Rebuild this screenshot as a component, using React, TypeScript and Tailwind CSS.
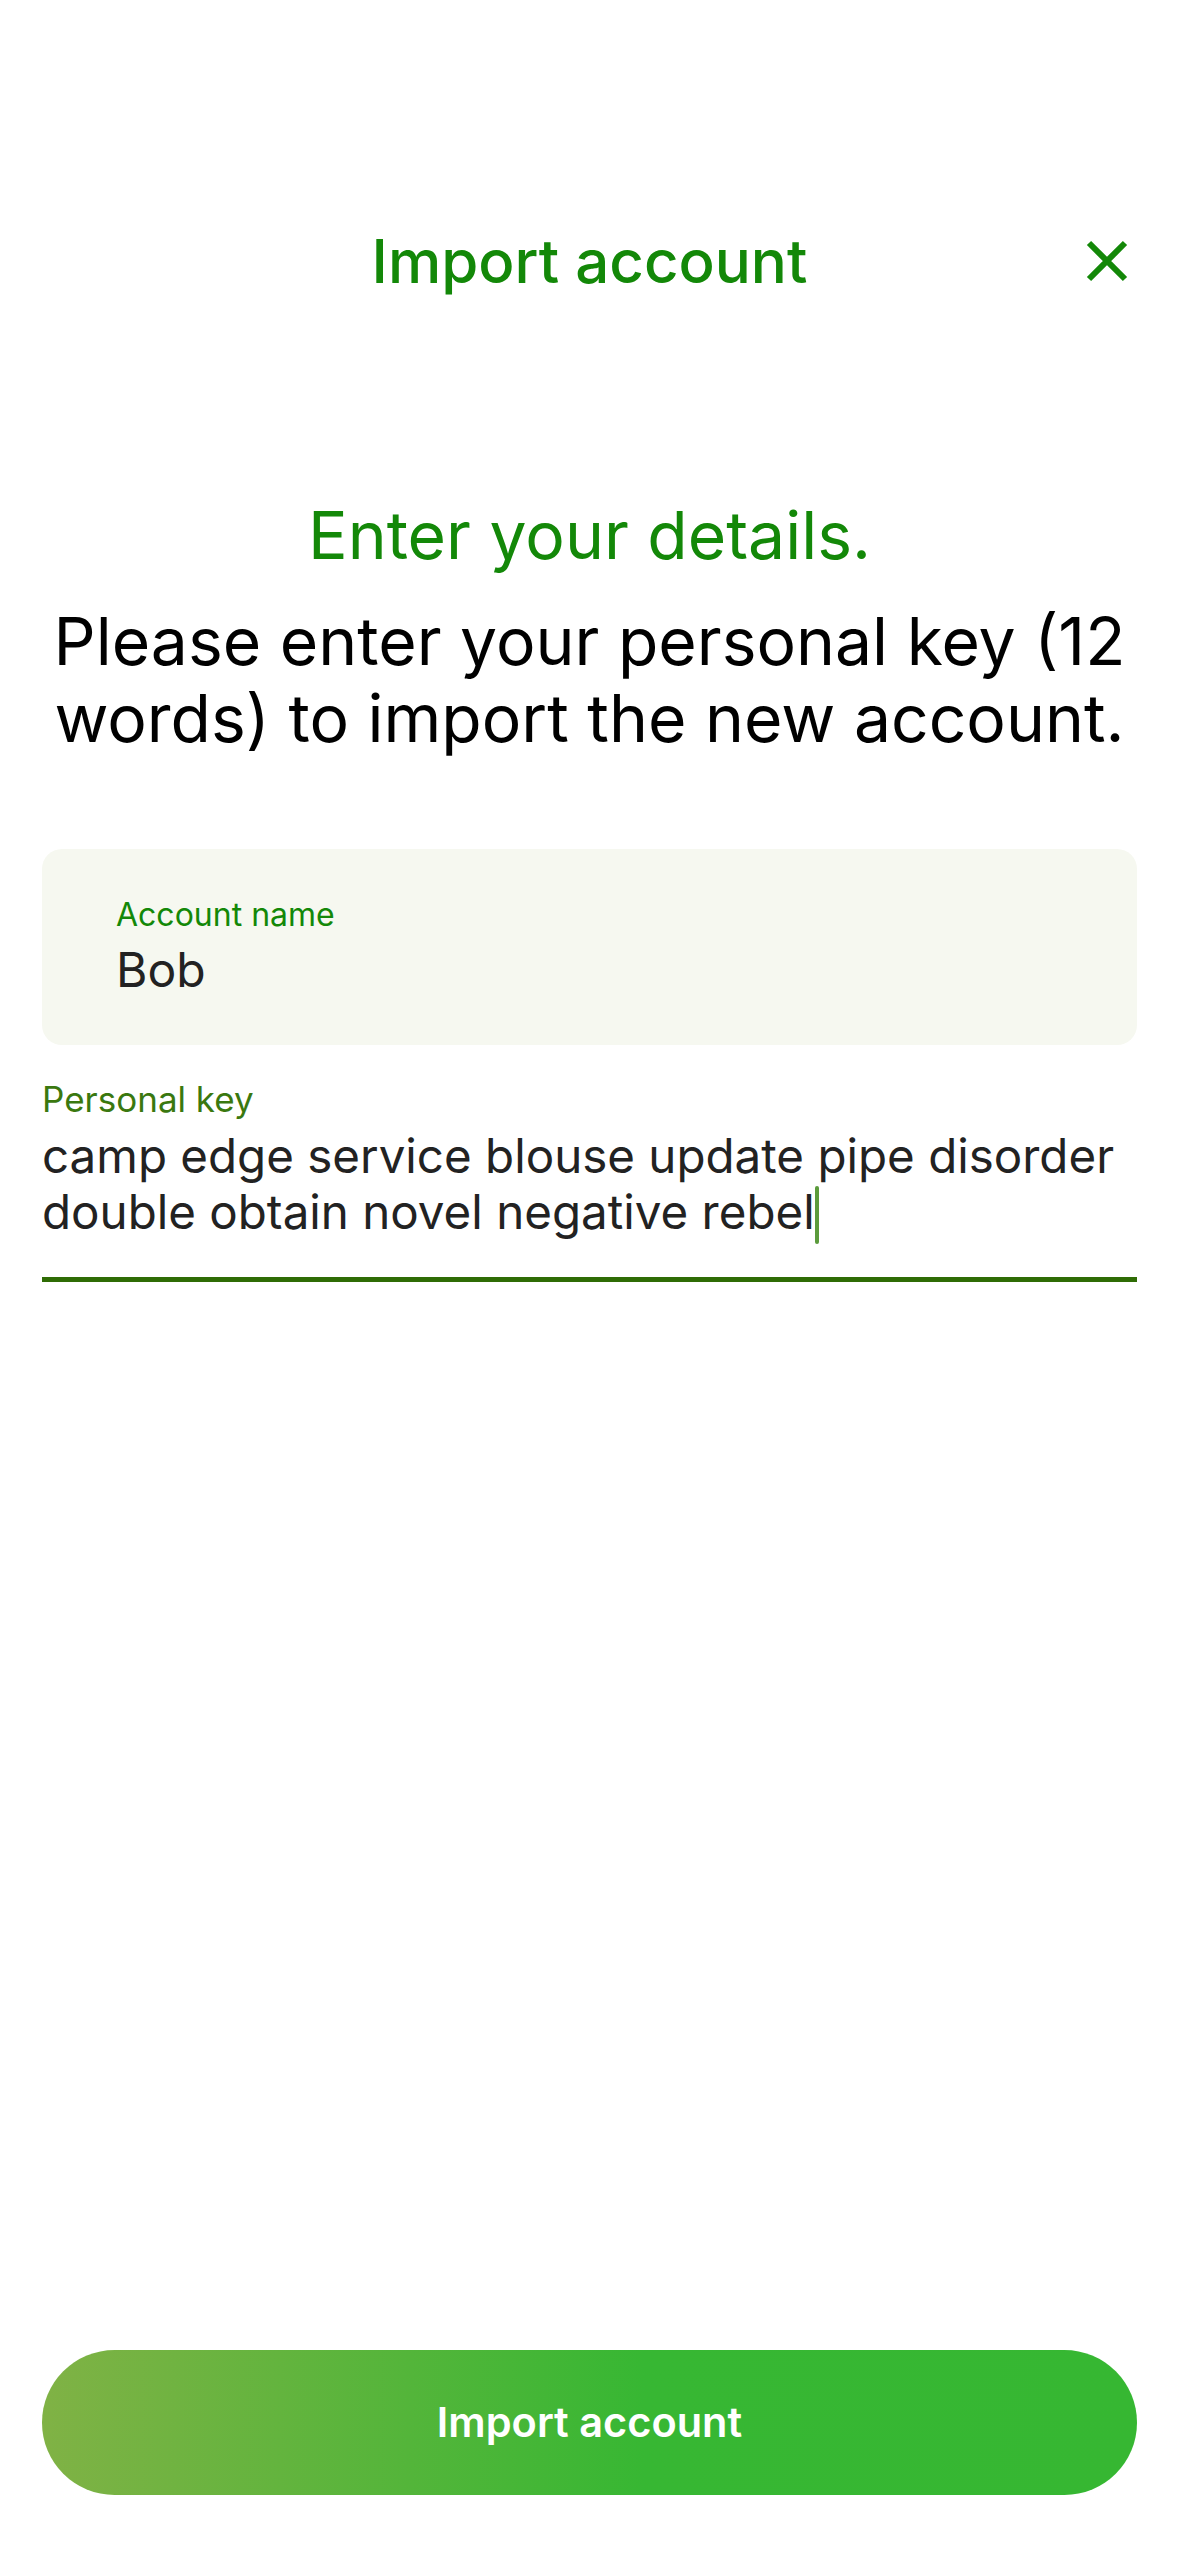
import React from 'react'

const CloseIcon = () => (
  <svg width="42" height="42" viewBox="0 0 42 42" fill="none">
    <path d="M3 3 L39 39 M39 3 L3 39" stroke="#138808" strokeWidth="6" strokeLinecap="butt" />
  </svg>
)

const App = () => {
  return (
    <div className="min-h-screen h-[2556px] w-full bg-white flex flex-col font-['Inter',sans-serif]">
      <div className="mt-[220px] h-[82px] grid grid-cols-[1fr_auto_1fr] items-center">
        <div></div>
        <h1 className="text-[60px] leading-[82px] font-medium text-[#138808]">Import account</h1>
        <div className="flex justify-end pr-[51px]">
          <CloseIcon />
        </div>
      </div>

      <div className="mt-[193px] px-[42px] text-center">
        <h2 className="text-[66px] leading-[80px] text-[#138808]">Enter your details.</h2>
        <p className="mt-[28px] text-[66px] leading-[77px] text-black">
          Please enter your personal key (12 words) to import the new account.
        </p>
      </div>

      <div className="mt-[92px] mx-[42px] h-[196px] rounded-[20px] bg-[#f6f8f0] pt-[47px] px-[74px]">
        <div className="text-[32px] leading-[38px] text-[#138808]">Account name</div>
        <div className="mt-[8px] text-[48px] leading-[56px] text-[#222222]">Bob</div>
      </div>

      <div className="mt-[34px] mx-[42px]">
        <div className="text-[35px] leading-[40px] text-[#3a780f]">Personal key</div>
        <div className="mt-[9px] text-[47.5px] leading-[56px] text-[#222222]">
          camp edge service blouse update pipe disorder double obtain novel negative rebel
          <span className="inline-block w-[4px] h-[58px] align-top translate-y-[2px] rounded-full bg-[#5b9b3c]"></span>
        </div>
        <div className="mt-[35px] h-[5px] bg-[#2f6c05]"></div>
      </div>

      <div className="mt-auto mx-[42px] mb-[61px]">
        <button className="w-full h-[145px] rounded-full bg-[linear-gradient(90deg,#80b245_0%,#37b733_55%,#36b732_100%)] text-white text-[41.5px] font-semibold">
          Import account
        </button>
      </div>
    </div>
  )
}

export default App
